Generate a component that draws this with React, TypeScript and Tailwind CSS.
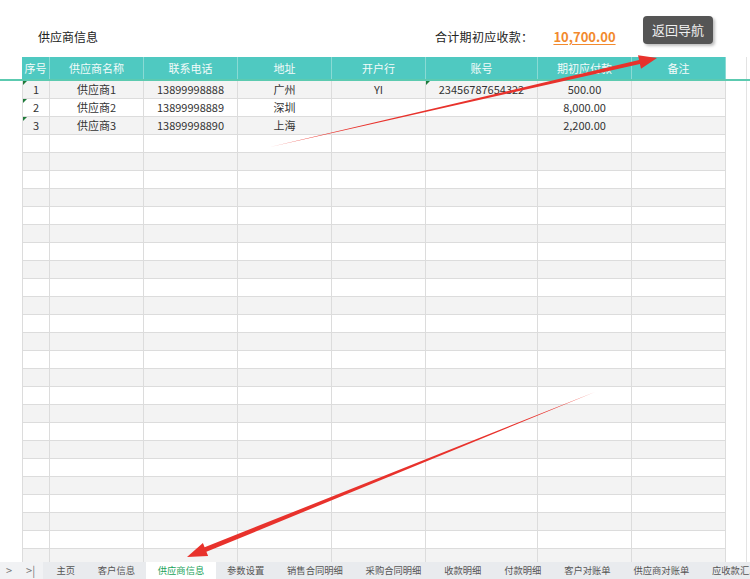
import React from 'react';

const cols = [
  { name: '序号', w: 'w-[28px]' },
  { name: '供应商名称', w: 'w-[94px]' },
  { name: '联系电话', w: 'w-[94px]' },
  { name: '地址', w: 'w-[94px]' },
  { name: '开户行', w: 'w-[94px]' },
  { name: '账号', w: 'w-[112px]' },
  { name: '期初应付款', w: 'w-[94px]' },
  { name: '备注', w: 'w-[94px]' },
];

const data = [
  ['1', '供应商1', '13899998888', '广州', 'YI', '23456787654322', '500.00', ''],
  ['2', '供应商2', '13899998889', '深圳', '', '', '8,000.00', ''],
  ['3', '供应商3', '13899998890', '上海', '', '', '2,200.00', ''],
];

const tabs = ['主页', '客户信息', '供应商信息', '参数设置', '销售合同明细', '采购合同明细', '收款明细', '付款明细', '客户对账单', '供应商对账单', '应收款汇总'];

const TOTAL_ROWS = 28;

function Marker() {
  return (
    <span className="absolute left-0 top-0 w-0 h-0 border-t-[4px] border-t-[#1f7a3a] border-r-[4px] border-r-transparent" />
  );
}

export default function App() {
  const rows = Array.from({ length: TOTAL_ROWS }, (_, i) => data[i] || ['', '', '', '', '', '', '', '']);

  return (
    <div
      className="relative w-[750px] h-[579px] overflow-hidden bg-white flex flex-col text-[#333]"
      style={{ fontFamily: '"Noto Sans CJK SC", "Noto Sans", sans-serif' }}
    >
      {/* top bar */}
      <div className="h-[57px] flex items-start shrink-0">
        <div className="ml-[38px] mt-[28px] text-[12px] text-[#222]">供应商信息</div>
        <div className="ml-[337px] mt-[28px] text-[12px] text-[#222] tracking-[0.3px]">合计期初应收款：</div>
        <div className="ml-[20px] mt-[27px] text-[13px] font-bold text-[#f28a2e] underline underline-offset-2">10,700.00</div>
        <button className="ml-auto mr-[37px] mt-[16px] w-[70px] h-[28px] rounded-[4px] bg-[#555555] text-[#eeeeee] text-[13px] shadow-[2px_2px_3px_rgba(0,0,0,0.25)]">
          返回导航
        </button>
      </div>

      {/* header row */}
      <div className="flex h-[24px] border-b-2 border-b-[#5ccab0] shrink-0">
        <div className="w-[22px]" />
        {cols.map((c) => (
          <div
            key={c.name}
            className={`${c.w} bg-[#4fc9c1] text-[#f4fbfa] text-[11px] flex items-center justify-center border-r border-r-[#8adad4] first:border-l first:border-l-[#8adad4]`}
          >
            {c.name}
          </div>
        ))}
        <div className="w-[21px] border-r border-r-[#e3e3e3]" />
      </div>

      {/* body */}
      <div className="flex-1 overflow-hidden">
        {rows.map((r, i) => (
          <div key={i} className="flex h-[18px]">
            <div className="w-[22px]" />
            {cols.map((c, j) => (
              <div
                key={c.name}
                className={`${c.w} relative text-[11px] flex items-center justify-center border-b border-r border-[#dcdcdc] ${j === 0 ? 'border-l' : ''} ${i % 2 === 0 ? 'bg-[#f3f3f3]' : 'bg-white'}`}
              >
                {r[j] && j === 0 && <Marker />}
                {r[j] && j === 5 && <Marker />}
                {r[j]}
              </div>
            ))}
            <div className="w-[21px] border-r border-r-[#e3e3e3]" />
          </div>
        ))}
      </div>

      {/* sheet tabs */}
      <div className="h-[17px] flex items-stretch bg-[#e9ebee] text-[9.3px] text-[#555] shrink-0 overflow-hidden">
        <div className="w-[43px] shrink-0 flex items-center gap-[14px] pl-[6px] bg-[#f1f2f4] text-[#777] text-[11px]">
          <span>&gt;</span>
          <span>&gt;|</span>
        </div>
        <div className="flex items-stretch pl-[2px]">
          {tabs.map((t) => (
            <div
              key={t}
              className={`flex items-center px-[11.4px] whitespace-nowrap ${t === '供应商信息' ? 'bg-white text-[#22a35a]' : ''}`}
            >
              {t}
            </div>
          ))}
        </div>
      </div>

      {/* annotation arrows */}
      <svg className="absolute inset-0 pointer-events-none" width="750" height="579">
        <polygon points="270,147 639.1,60.1 638,55.2 657,58 641,68.8 639.9,63.9" fill="#e8322c" />
        <polygon points="595,392 206.4,551.8 208.1,556 187,557 202.9,543 204.6,547.2" fill="#e8322c" />
      </svg>
    </div>
  );
}
